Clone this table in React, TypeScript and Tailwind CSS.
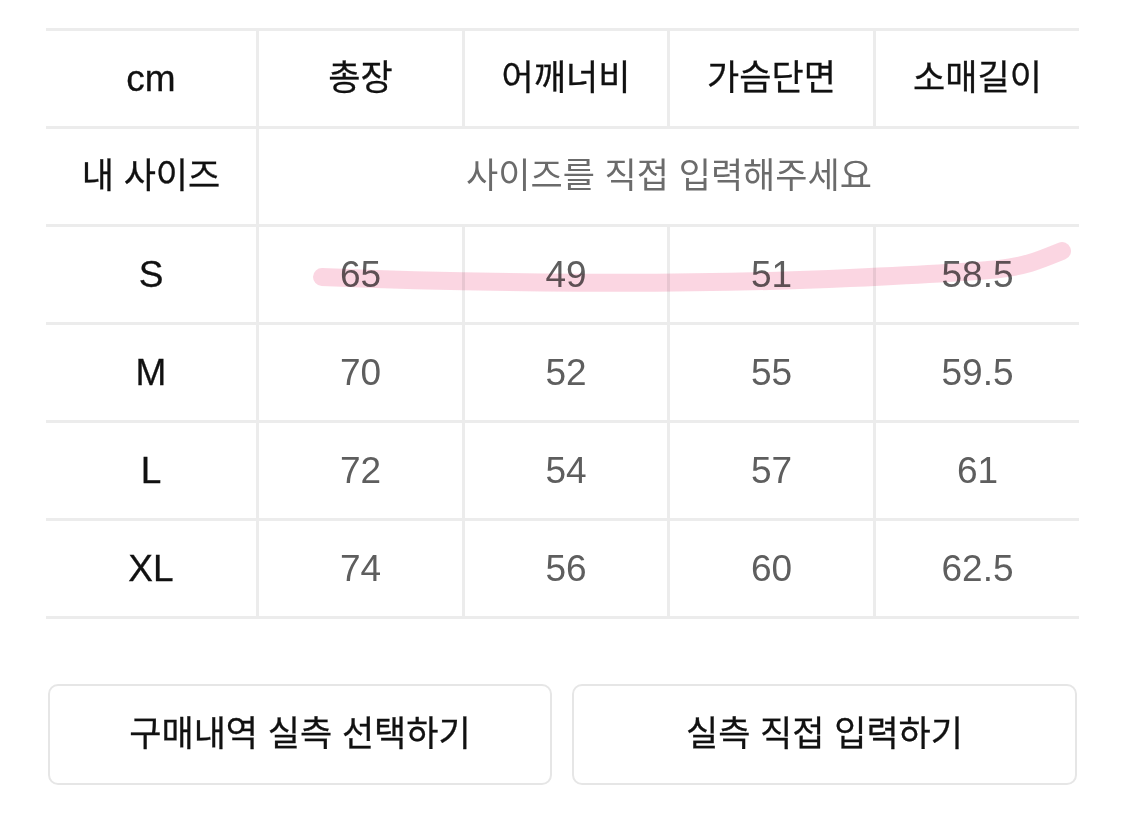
const KR = "font-['Liberation_Sans','Noto_Sans_CJK_KR',sans-serif]"
// Noto CJK ships regular and bold only, so a thin stroke gives the medium weight
const medium = "[-webkit-text-stroke:0.3px_#111]"

const columns = ["총장", "어깨너비", "가슴단면", "소매길이"]

const rows: { size: string; values: string[] }[] = [
  { size: "S", values: ["65", "49", "51", "58.5"] },
  { size: "M", values: ["70", "52", "55", "59.5"] },
  { size: "L", values: ["72", "54", "57", "61"] },
  { size: "XL", values: ["74", "56", "60", "62.5"] },
]

const cell = "flex h-[98px] items-center justify-center border-b-[3px] border-[#ececec]"

export default function App() {
  return (
    <div className={`relative h-[835px] w-[1125px] overflow-hidden bg-white pl-[46px] pt-[28px] ${KR}`}>
      {/* size table */}
      <div className="grid w-[1033px] grid-cols-[210px_206px_205px_206px_206px] border-t-[3px] border-[#ececec]">
        <div className={`${cell} text-[37px] text-[#111] ${medium}`}>cm</div>
        {columns.map((c) => (
          <div key={c} className={`${cell} border-l-[3px] text-[35px] text-[#111] ${medium}`}>
            {c}
          </div>
        ))}

        <div className={`${cell} text-[35px] text-[#111] ${medium}`}>내 사이즈</div>
        <div className={`${cell} col-span-4 border-l-[3px] text-[35px] text-[#6b6b6b]`}>
          사이즈를 직접 입력해주세요
        </div>

        {rows.map((r) => (
          <div key={r.size} className="contents">
            <div className={`${cell} text-[37px] text-[#111] ${medium}`}>{r.size}</div>
            {r.values.map((v, i) => (
              <div key={i} className={`${cell} border-l-[3px] text-[37px] text-[#5e5e5e]`}>
                {v}
              </div>
            ))}
          </div>
        ))}
      </div>

      {/* actions */}
      <div className="mt-[65px] flex w-[1031px] gap-[20px] pl-[2px]">
        <button className={`flex h-[101px] w-[504px] items-center justify-center rounded-[10px] border-2 border-[#e6e6e6] bg-white text-[35px] text-[#111] ${medium}`}>
          구매내역 실측 선택하기
        </button>
        <button className={`flex h-[101px] w-[505px] items-center justify-center rounded-[10px] border-2 border-[#e6e6e6] bg-white text-[35px] text-[#111] ${medium}`}>
          실측 직접 입력하기
        </button>
      </div>

      {/* highlighter stroke over the S row */}
      <svg
        className="pointer-events-none absolute left-0 top-0 mix-blend-multiply"
        width="1125"
        height="835"
        viewBox="0 0 1125 835"
      >
        <path
          d="M 322 277 C 470 283, 680 286, 850 278 S 1015 270, 1062 251"
          fill="none"
          stroke="#fbd2df"
          strokeWidth="18"
          strokeLinecap="round"
          opacity="0.9"
        />
      </svg>
    </div>
  )
}
